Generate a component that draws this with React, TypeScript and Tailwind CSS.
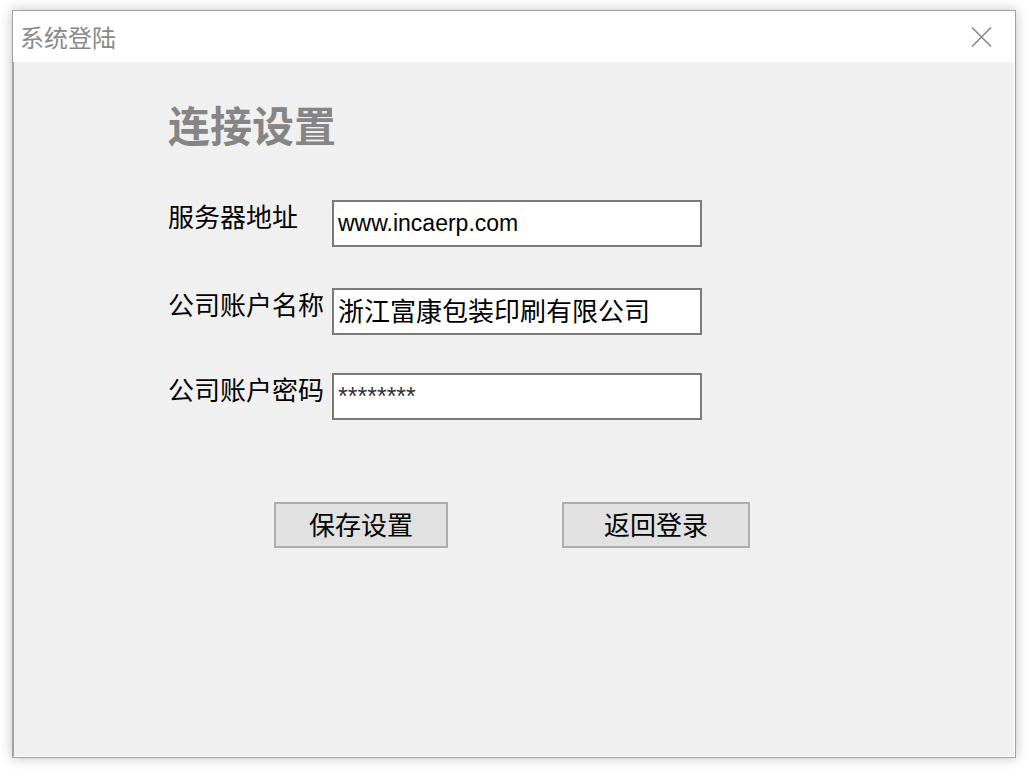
import React from "react";

const CJK = '"Noto Sans CJK SC", "Noto Sans", sans-serif';
const LAT = '"Liberation Sans", "Noto Sans CJK SC", sans-serif';

function Field({ label, children, top }: { label: string; children: React.ReactNode; top: string }) {
  return (
    <div className={`flex items-start ${top}`}>
      <div className="w-[164px] shrink-0 pt-[3px] text-[26px] leading-[26px] text-black whitespace-nowrap">{label}</div>
      <div className="w-[370px] h-[47px] border-2 border-[#7a7a7a] bg-white flex items-center pl-[4px] text-black">
        {children}
      </div>
    </div>
  );
}

export default function App() {
  return (
    <div className="w-[1029px] h-[771px] bg-white pt-[10px] pl-[12px]" style={{ fontFamily: CJK }}>
      <div className="w-[1004px] h-[748px] border border-[#a3a3a3] bg-white flex flex-col shadow-[0_0_12px_rgba(0,0,0,0.25)]">
        <div className="h-[51px] shrink-0 flex items-center justify-between pl-[7px] pr-[23px]">
          <span className="text-[24px] leading-[24px] text-[#8a8a8a]">系统登陆</span>
          <svg width="21" height="20" viewBox="0 0 21 20">
            <path d="M1 0.5 L20 19.5 M20 0.5 L1 19.5" stroke="#8a8a8a" strokeWidth="1.6" fill="none" />
          </svg>
        </div>
        <div className="flex-1 bg-[#f0f0f0] border-l border-l-[#a0a0a0] border-r border-r-white border-b border-b-white pl-[154px] flex flex-col">
          <div className="mt-[41px] text-[42px] leading-[42px] font-semibold text-[#858585]">连接设置</div>
          <Field label="服务器地址" top="mt-[55px]">
            <span className="text-[23px]" style={{ fontFamily: LAT }}>www.incaerp.com</span>
          </Field>
          <Field label="公司账户名称" top="mt-[41px]">
            <span className="text-[26px] leading-[26px] pb-[4px]">浙江富康包装印刷有限公司</span>
          </Field>
          <Field label="公司账户密码" top="mt-[38px]">
            <span className="text-[25px] text-[#333]" style={{ fontFamily: LAT }}>********</span>
          </Field>
          <div className="flex mt-[82px] ml-[106px]">
            <button className="w-[174px] h-[46px] border-2 border-[#adadad] bg-[#e1e1e1] flex items-center justify-center pb-[3px] text-[26px] leading-[26px] text-black">
              保存设置
            </button>
            <button className="ml-[114px] w-[188px] h-[46px] border-2 border-[#adadad] bg-[#e1e1e1] flex items-center justify-center pb-[3px] text-[26px] leading-[26px] text-black">
              返回登录
            </button>
          </div>
        </div>
      </div>
    </div>
  );
}
